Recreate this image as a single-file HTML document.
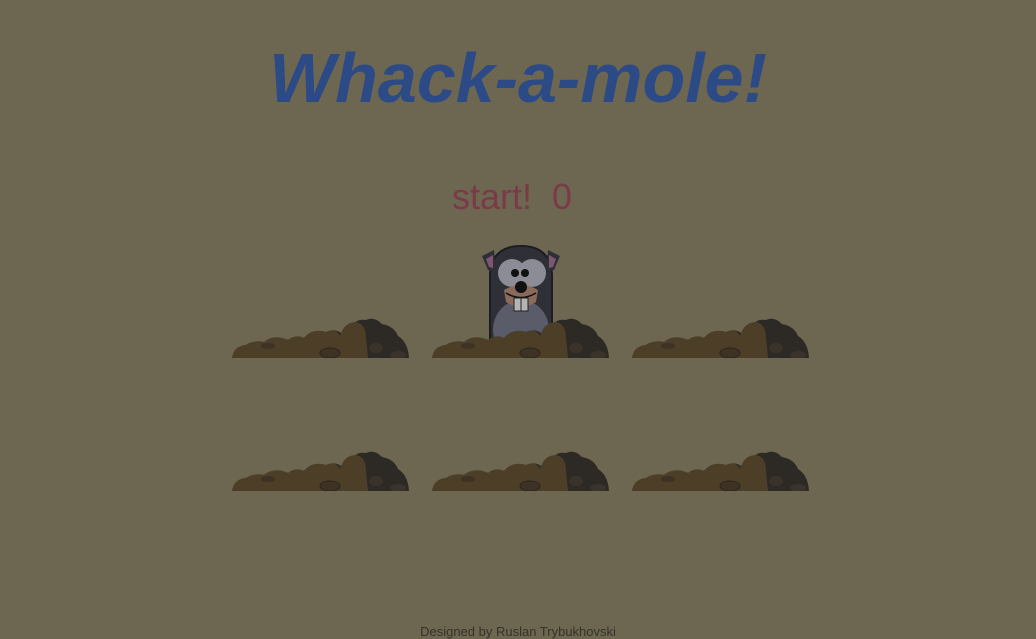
<!DOCTYPE html>
<html><head><style>
html,body{margin:0;padding:0;width:1036px;height:638px;overflow:hidden;background:#6d6752;font-family:"Liberation Sans",sans-serif}
h1{position:absolute;top:38px;left:0;width:1036px;text-align:center;margin:0;font-size:70px;font-weight:bold;font-style:italic;color:#2c4a86;letter-spacing:0px;line-height:80px}
.s{position:absolute;top:176px;left:452px;font-size:36px;color:#7b3a47;letter-spacing:0px}
.m{position:absolute;width:177px;height:40px}
.f{position:absolute;top:624px;left:0;width:1036px;text-align:center;font-size:13px;color:#35322b}
</style></head><body>
<h1>Whack-a-mole!</h1>
<div class="s">start! &nbsp;0</div>
<svg style="position:absolute;left:478px;top:244px" width="86" height="100" viewBox="0 0 86 100">
<path d="M12 30 Q14 2 43 2 Q72 2 74 30 L74 100 L12 100 Z" fill="#2e2f37" stroke="#1c1d22" stroke-width="2"/>
<path d="M4 12 L16 6 L18 28 L10 26 Z" fill="#2e2f37"/><path d="M8 15 L15 11 L15 24 L11 23 Z" fill="#7d5670"/>
<path d="M82 12 L70 6 L68 28 L76 26 Z" fill="#2e2f37"/><path d="M78 15 L71 11 L71 24 L75 23 Z" fill="#7d5670"/>
<ellipse cx="43" cy="86" rx="28" ry="30" fill="#5a5c6a"/>
<ellipse cx="34" cy="29" rx="14" ry="14" fill="#8b8c96"/><ellipse cx="54" cy="29" rx="14" ry="14" fill="#8b8c96"/>
<circle cx="37" cy="29" r="4" fill="#111"/><circle cx="47" cy="29" r="4" fill="#111"/>
<path d="M26 46 Q43 36 60 46 L58 58 Q43 68 28 58 Z" fill="#8a6a5a"/>
<circle cx="43" cy="43" r="6" fill="#111"/>
<path d="M28 49 Q43 58 58 49" stroke="#111" stroke-width="1.5" fill="none"/>
<rect x="36" y="54" width="7" height="13" fill="#b4b4b4" stroke="#222"/><rect x="43" y="54" width="7" height="13" fill="#b4b4b4" stroke="#222"/>
</svg>
<svg width="0" height="0" style="position:absolute"><defs>
<g id="mound">
<path d="M0 40 Q2 28 14 27 Q22 22 32 24 Q42 16 56 22 Q64 16 72 20 Q80 10 94 14 Q104 10 110 16 L118 12 Q122 0 134 2 Q142 -2 150 6 Q162 8 166 18 Q176 24 177 40 Z" fill="#2d2a26"/>
<path d="M0 40 Q2 28 14 27 Q22 22 32 24 Q42 16 56 22 Q64 16 72 20 Q80 10 94 14 Q104 10 108 18 Q112 4 124 4 Q134 6 134 20 L136 40 Z" fill="#4d3e27"/>
<ellipse cx="98" cy="35" rx="10" ry="5" fill="#3e3224" stroke="#2a241c"/>
<ellipse cx="36" cy="28" rx="7" ry="3" fill="#3e3224"/>
<ellipse cx="144" cy="30" rx="7" ry="5" fill="#3a332b"/>
<ellipse cx="166" cy="37" rx="8" ry="4" fill="#3a332b"/>
</g></defs></svg>
<svg class="m" style="left:232px;top:318px" viewBox="0 0 177 40"><use href="#mound"/></svg>
<svg class="m" style="left:432px;top:318px" viewBox="0 0 177 40"><use href="#mound"/></svg>
<svg class="m" style="left:632px;top:318px" viewBox="0 0 177 40"><use href="#mound"/></svg>
<svg class="m" style="left:232px;top:451px" viewBox="0 0 177 40"><use href="#mound"/></svg>
<svg class="m" style="left:432px;top:451px" viewBox="0 0 177 40"><use href="#mound"/></svg>
<svg class="m" style="left:632px;top:451px" viewBox="0 0 177 40"><use href="#mound"/></svg>
<div class="f">Designed by Ruslan Trybukhovski</div>
</body></html>
